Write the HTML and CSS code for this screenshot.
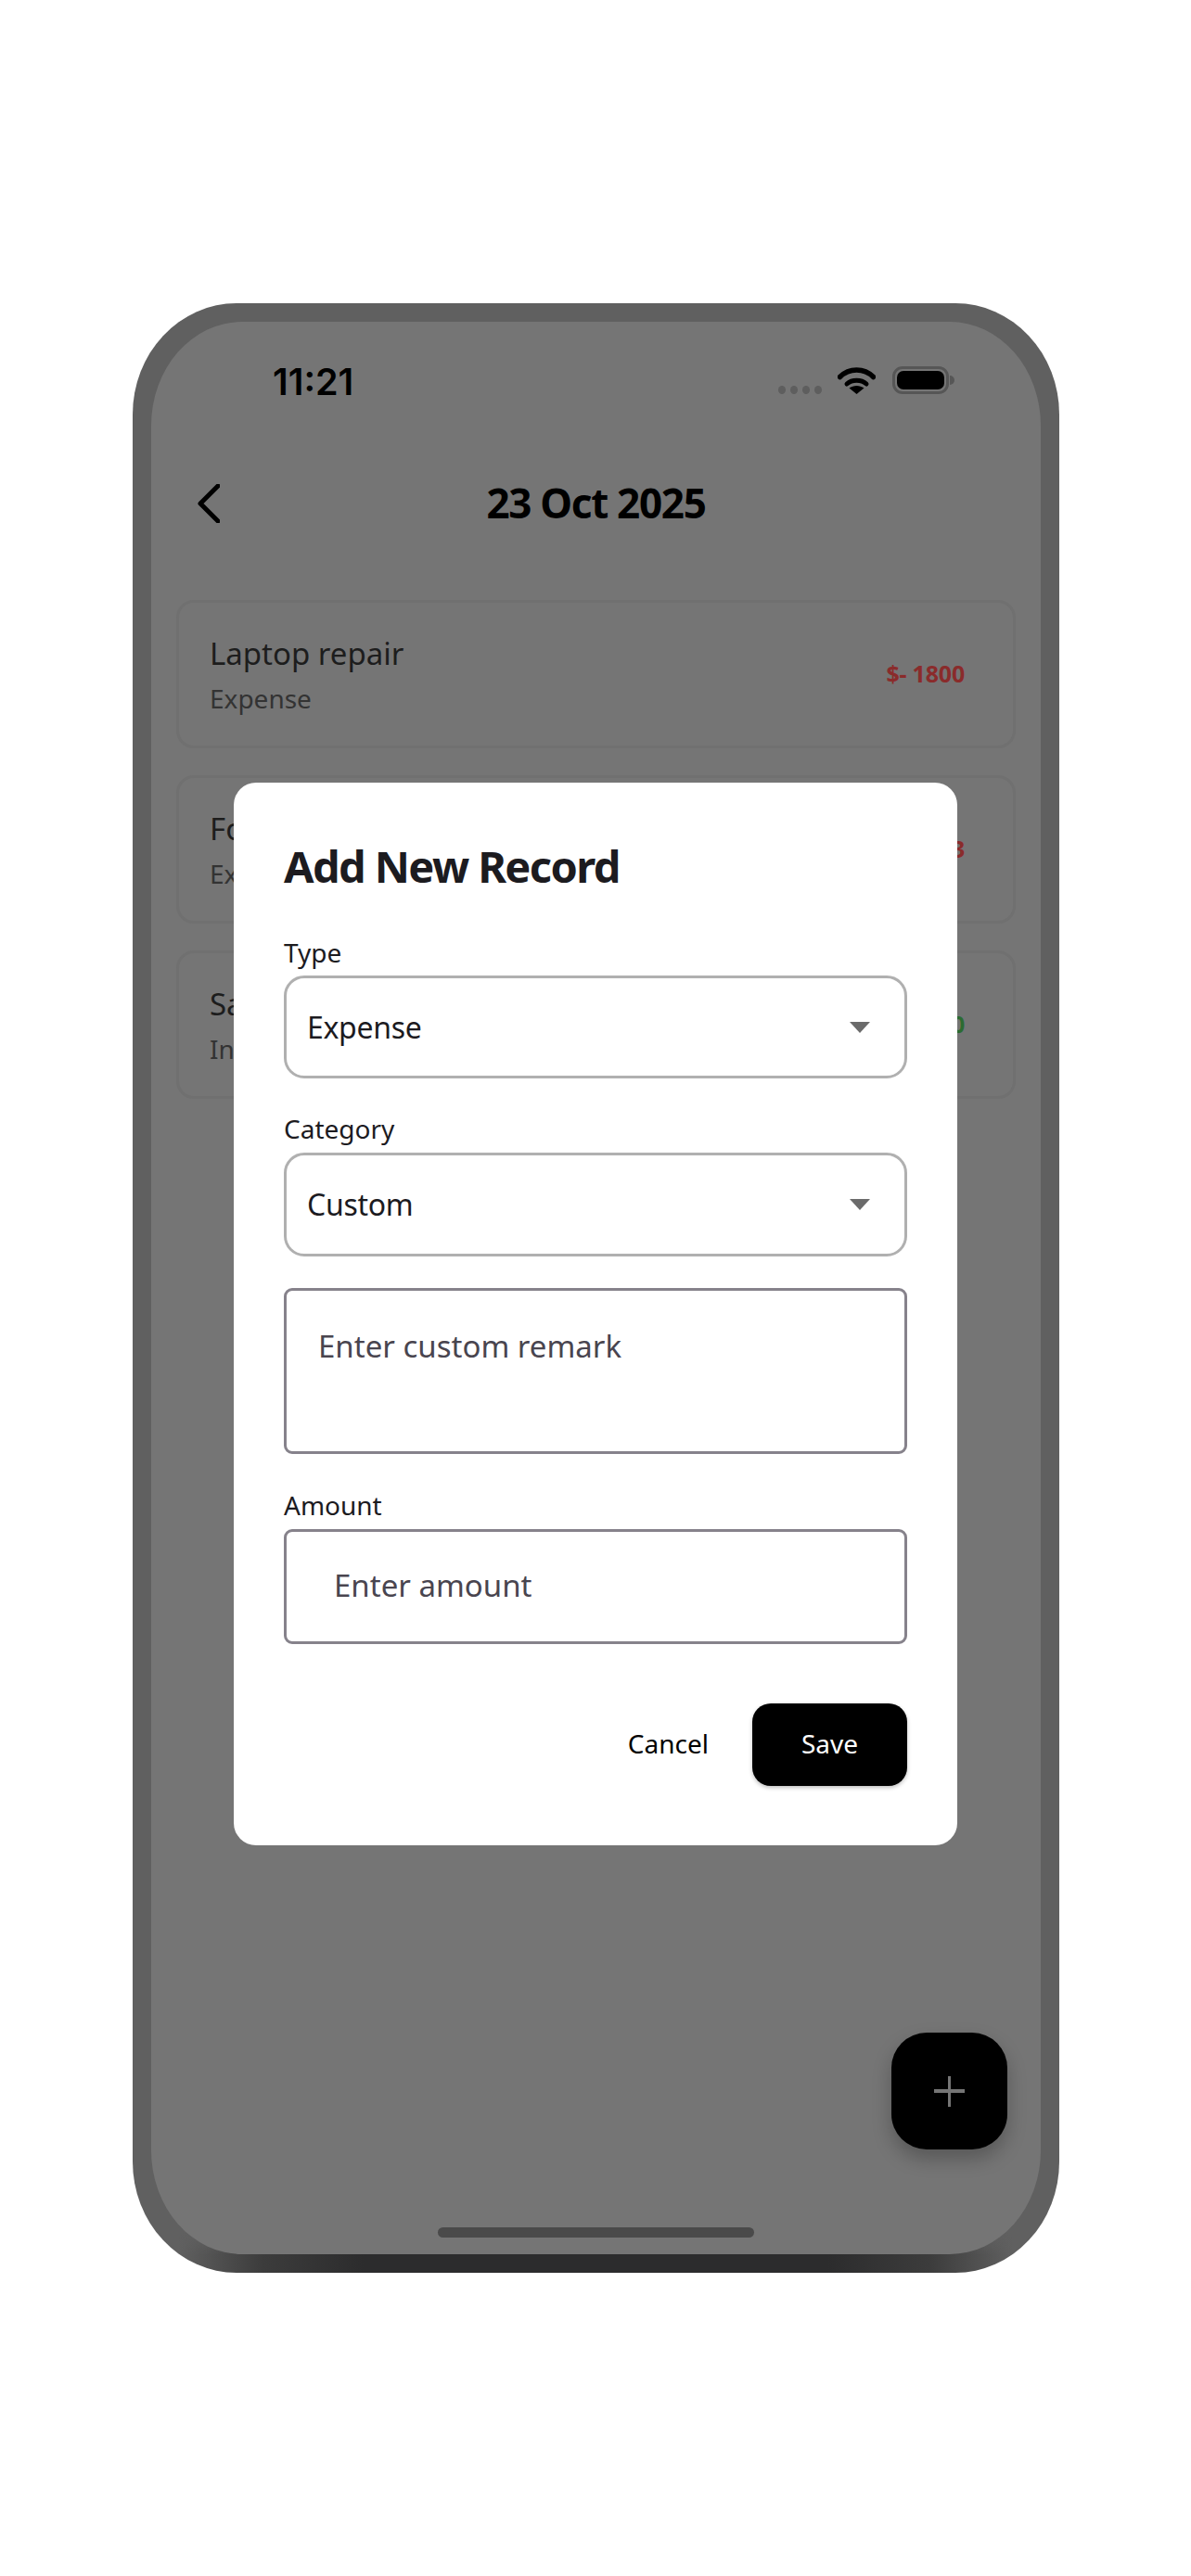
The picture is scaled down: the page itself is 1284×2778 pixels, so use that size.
FILE: index.html
```
<!DOCTYPE html>
<html lang="en">
<head>
<meta charset="utf-8">
<title>Add New Record</title>
<link rel="stylesheet" href="styles.css">
</head>
<body>
<main class="phone">
  <div class="screen">
    <div class="status">
      <span class="time">11:21</span>
      <span class="dots"><i></i><i></i><i></i><i></i></span>
      <svg class="wifi" viewBox="0 0 41 30" width="41" height="30" aria-hidden="true">
        <path d="M2.5 11.5C12.5 1.5 28.5 1.5 38.5 11.5" fill="none" stroke="#000" stroke-width="5.5" stroke-linecap="round"/>
        <path d="M10 19C15.5 14 25.5 14 31 19" fill="none" stroke="#000" stroke-width="5" stroke-linecap="round"/>
        <path d="M20.5 30L12.5 23.5C17 20 24 20 28.5 23.5Z" fill="#000"/>
      </svg>
      <span class="battery"><b></b></span>
    </div>
    <header class="topbar">
      <svg class="back" viewBox="0 0 24 42" width="24" height="42" aria-hidden="true">
        <path d="M22 2L3 21L22 40" fill="none" stroke="#000" stroke-width="5" stroke-linecap="round" stroke-linejoin="round"/>
      </svg>
      <h1 class="date">23 Oct 2025</h1>
    </header>
    <section class="list">
      <article class="card">
        <div><div class="name">Laptop repair</div><div class="kind">Expense</div></div>
        <div class="amt neg">$- 1800</div>
      </article>
      <article class="card">
        <div><div class="name">Food</div><div class="kind">Expense</div></div>
        <div class="amt neg">$- 2503</div>
      </article>
      <article class="card">
        <div><div class="name">Salary</div><div class="kind">Income</div></div>
        <div class="amt pos">$+ 5000</div>
      </article>
    </section>
    <button class="fab" type="button" aria-label="Add"><span class="plus"></span></button>
    <div class="home"></div>
    <form class="modal">
      <h2 class="modal-title">Add New Record</h2>
      <div class="label l-type">Type</div>
      <div class="select s-type"><span>Expense</span><i class="caret"></i></div>
      <div class="label l-cat">Category</div>
      <div class="select s-cat"><span>Custom</span><i class="caret"></i></div>
      <div class="box remark"><span>Enter custom remark</span></div>
      <div class="label l-amt">Amount</div>
      <div class="box amount"><span>Enter amount</span></div>
      <div class="actions">
        <button class="cancel" type="button">Cancel</button>
        <button class="save" type="button">Save</button>
      </div>
    </form>
  </div>
</main>
</body>
</html>
```
FILE: styles.css
```
* { box-sizing: border-box; }
html, body { margin: 0; padding: 0; }
body {
  width: 1284px;
  height: 2778px;
  background: #fff;
  font-family: "Noto Sans", "Open Sans", sans-serif;
  padding: 327px 0 0 143px;
  overflow: hidden;
}
.phone {
  width: 999px;
  height: 2124px;
  padding: 20px;
  border-radius: 112px / 120px;
  background:
    linear-gradient(to bottom, #606060 0, rgba(96,96,96,0) 55%) no-repeat 0 100% / 100% 44px,
    linear-gradient(to right, #606060 5%, #3c3c3c 14%, #2c2c2d 25%, #2c2c2d 75%, #3c3c3c 86%, #606060 95%) no-repeat 0 100% / 100% 44px,
    #606060;
}
.screen {
  position: relative;
  height: 100%;
  border-radius: 98px / 112px;
  background: #757575;
  display: flex;
  flex-direction: column;
  overflow: hidden;
}
.status {
  display: flex;
  align-items: flex-end;
  height: 30px;
  margin-top: 48px;
  padding: 0 99px 0 131px;
}
.time {
  font-family: Inter, sans-serif;
  font-size: 39.5px;
  font-weight: 600;
  line-height: 32px;
  color: #000;
  margin-right: auto;
  position: relative;
  top: 3px;
}
.dots { display: flex; gap: 5px; margin-right: 17px; }
.dots i { width: 8px; height: 9px; border-radius: 50%; background: #5e5e5e; }
.wifi { display: block; margin-right: 18px; }
.battery {
  position: relative;
  display: block;
  width: 61px;
  height: 30px;
  border: 3px solid #565656;
  border-radius: 11px;
  padding: 2px;
}
.battery b { display: block; height: 100%; background: #000; border-radius: 7px; }
.battery::after {
  content: "";
  position: absolute;
  right: -9px;
  top: 7px;
  width: 5px;
  height: 10px;
  background: #565656;
  border-radius: 0 5px 5px 0;
}
.topbar {
  position: relative;
  display: flex;
  align-items: center;
  justify-content: center;
  height: 80px;
  margin-top: 78px;
}
.back { position: absolute; left: 50px; top: 19px; }
.date {
  margin: 0 0 2px;
  font-size: 44px;
  font-weight: 700;
  letter-spacing: -1.3px;
  color: #000;
  line-height: 78px;
}
.list {
  display: flex;
  flex-direction: column;
  gap: 29px;
  margin-top: 64px;
  padding: 0 27px;
}
.card {
  height: 160px;
  border: 3px solid #707070;
  border-radius: 19px;
  padding: 0 52px 0 33px;
  display: flex;
  align-items: center;
  justify-content: space-between;
}
.name { font-size: 33px; line-height: 46px; color: #1d1d1d; margin-top: 1px; }
.kind { font-size: 28px; line-height: 40px; color: #333; margin-top: 5px; }
.amt { font-size: 25px; font-weight: 700; letter-spacing: -0.2px; margin-bottom: 3px; }
.neg { color: #8a2b2b; }
.pos { color: #2c6b30; }
.fab {
  position: absolute;
  left: 798px;
  top: 1845px;
  width: 125px;
  height: 126px;
  border: 0;
  padding: 0;
  border-radius: 38px;
  background: #000;
  box-shadow: 0 10px 20px rgba(0,0,0,.25);
  display: flex;
  align-items: center;
  justify-content: center;
}
.plus { position: relative; display: block; width: 33px; height: 33px; }
.plus::before, .plus::after { content: ""; position: absolute; background: #757575; }
.plus::before { left: 0; right: 0; top: 14px; height: 4px; }
.plus::after { top: 0; bottom: 0; left: 15px; width: 3px; }
.home {
  width: 341px;
  height: 11px;
  margin: auto auto 18px;
  border-radius: 6px;
  background: #4a4a4a;
}
.modal {
  position: absolute;
  left: 89px;
  top: 497px;
  width: 780px;
  padding: 60px 54px 64px;
  border-radius: 24px;
  background: #fff;
}
.modal-title {
  margin: 0;
  font-size: 47px;
  font-weight: 700;
  line-height: 60px;
  letter-spacing: -1.6px;
  color: #1c1b1f;
}
.label { font-size: 28px; line-height: 36px; color: #1c1b1f; }
.l-type { margin-top: 45px; }
.l-cat { margin-top: 36px; }
.l-amt { margin-top: 37px; }
.select {
  display: flex;
  align-items: center;
  justify-content: space-between;
  border: 3px solid #b0b0b0;
  border-radius: 22px;
  padding: 0 37px 0 22px;
  font-size: 32px;
  letter-spacing: -0.3px;
  color: #1c1b1f;
}
.s-type { height: 111px; margin-top: 7px; }
.s-cat { height: 112px; margin-top: 8px; }
.s-cat span { margin-bottom: 2px; }
.caret {
  width: 0;
  height: 0;
  border-left: 11.5px solid transparent;
  border-right: 11.5px solid transparent;
  border-top: 12px solid #6b6b6b;
}
.box {
  border: 3px solid #86828b;
  border-radius: 9px;
  font-size: 33px;
  color: #49454f;
}
.remark { height: 179px; margin-top: 34px; padding: 38px 0 0 34px; line-height: 44px; }
.amount { height: 124px; margin-top: 8px; padding: 0 0 3px 51px; display: flex; align-items: center; }
.actions {
  display: flex;
  justify-content: flex-end;
  align-items: center;
  gap: 47px;
  margin-top: 64px;
}
.cancel, .save {
  font-family: inherit;
  font-size: 28px;
  border: 0;
  padding: 0 0 3px;
  background: none;
}
.cancel { color: #000; }
.save {
  width: 167px;
  height: 89px;
  border-radius: 20px;
  background: #000;
  color: #fff;
  box-shadow: 0 2px 4px rgba(0,0,0,.25);
}
```
